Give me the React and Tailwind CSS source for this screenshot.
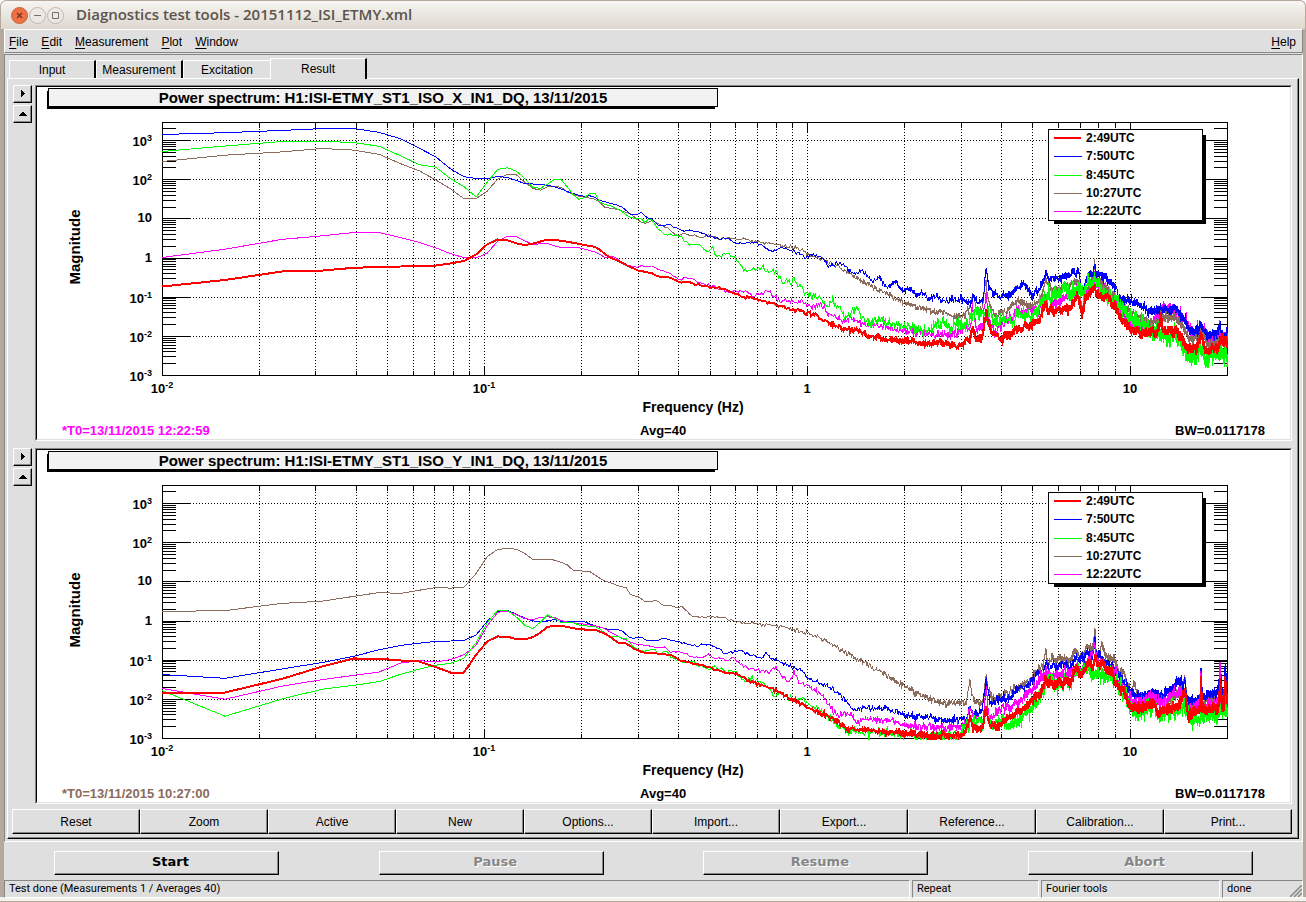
import { useMemo } from 'react'
import clsx from 'clsx'

const MENUS = ['File', 'Edit', 'Measurement', 'Plot', 'Window']
const TABS = ['Input', 'Measurement', 'Excitation', 'Result']
const ACTIONS = [
  'Reset',
  'Zoom',
  'Active',
  'New',
  'Options...',
  'Import...',
  'Export...',
  'Reference...',
  'Calibration...',
  'Print...',
]

const RED = '#ff0000'
const BLUE = '#0000ff'
const GREEN = '#00ff00'
const BROWN = '#8b6b5c'
const MAGENTA = '#ff00ff'

const LEGEND = [
  { label: '2:49UTC', color: RED, wide: true },
  { label: '7:50UTC', color: BLUE },
  { label: '8:45UTC', color: GREEN },
  { label: '10:27UTC', color: BROWN },
  { label: '12:22UTC', color: MAGENTA },
]

// Plot frame inside the canvas
const LEFT = 162.5
const RIGHT = 1227.5
const TOP = 122.5
const BOTTOM = 375.5
const X_DECADE = 322.67
const Y_DECADE = 39.16

// Frequency spacing of the FFT bins
const BIN = 0.0078125

// Each trace is an envelope (x,y pairs) plus the scatter of the single bins
const X_TRACES = [
  {
    color: MAGENTA,
    noise: 2.2,
    points:
      '162,257 200,252 230,248 260,242 280,239 300,238 325,235 350,232 380,232 392,235 417,241 435,247 450,253 463,257 475,258 487,253 497,241 507,236 517,236 523,239 530,244 547,243 560,247 578,247 597,252 605,257 615,256 623,263 632,266 653,266 663,271 670,272 677,278 690,278 710,285 727,290 747,291 753,295 763,293 768,290 775,297 780,300 793,301 803,301 808,307 822,305 828,313 842,320 850,318 863,323 880,325 903,330 930,333 950,335 960,330 970,328 973,308 976,328 983,328 986,293 989,322 993,328 1007,323 1018,310 1033,312 1042,305 1046,295 1050,302 1060,300 1077,290 1082,310 1088,288 1093,282 1095,272 1096,282 1108,292 1120,308 1130,323 1147,327 1157,318 1161,308 1178,312 1187,323 1193,333 1201,327 1208,337 1219,333 1220,320 1221,335 1228,337',
  },
  {
    color: BROWN,
    noise: 1.6,
    points:
      '162,161 200,157 233,154 260,153 300,150 320,148 340,148 357,150 380,154 400,163 417,169 435,179 450,188 463,198 475,199 487,191 497,179 507,174 515,173 523,180 530,187 540,190 547,186 560,186 568,192 580,196 597,199 605,207 618,209 630,213 643,223 652,220 662,225 670,229 677,236 683,233 700,237 707,235 718,238 728,237 757,241 777,244 797,248 813,255 830,262 847,271 863,281 880,290 903,302 927,309 947,314 965,316 970,308 973,292 976,310 982,310 986,278 989,303 995,314 1007,310 1018,300 1033,306 1040,300 1046,278 1051,290 1063,287 1075,280 1079,283 1082,307 1088,287 1093,278 1095,260 1096,280 1108,288 1120,302 1130,312 1143,318 1153,323 1160,318 1161,305 1162,318 1178,318 1190,340 1201,332 1208,343 1228,340',
  },
  {
    color: BLUE,
    noise: 1.7,
    points:
      '162,134 200,133 233,132 260,131 300,129 325,128 357,128 380,132 400,138 420,148 437,157 450,168 463,176 475,178 488,178 497,176 510,177 523,183 543,184 558,187 567,191 583,196 592,195 600,200 615,204 623,207 632,215 642,212 647,217 653,218 657,225 670,224 680,229 700,231 710,235 720,239 728,237 735,242 757,242 767,248 773,250 782,247 792,250 805,257 813,254 822,257 828,265 843,263 852,273 862,270 872,280 880,277 887,287 895,282 903,290 910,287 915,295 923,292 928,298 937,295 943,300 960,299 968,303 972,301 973,292 977,301 983,297 986,267 989,287 993,297 1007,295 1023,284 1033,293 1042,283 1046,272 1050,279 1063,277 1073,271 1078,272 1082,291 1087,278 1093,272 1095,262 1096,272 1107,277 1115,287 1120,297 1130,300 1143,305 1148,312 1157,308 1177,309 1185,320 1190,330 1197,330 1201,323 1207,335 1218,333 1220,325 1223,337 1228,330',
  },
  {
    color: GREEN,
    noise: 3,
    points:
      '162,151 200,147 233,145 275,141 325,141 357,142 380,146 400,155 418,164 435,166 450,178 463,185 475,198 487,182 497,169 507,167 517,171 527,180 532,187 540,188 547,184 554,179 560,178 565,183 572,193 578,199 583,198 590,193 595,193 600,202 615,207 623,212 632,218 642,218 643,221 652,219 657,226 665,234 680,234 688,245 700,243 707,252 713,247 718,257 728,252 745,270 763,267 770,272 773,269 782,280 792,283 793,277 805,292 820,295 827,307 833,300 840,308 845,317 857,308 868,323 877,319 893,323 910,327 927,331 943,321 950,328 960,320 968,323 975,308 984,315 987,311 993,317 1003,323 1023,315 1033,313 1042,303 1047,295 1063,290 1080,290 1082,300 1088,283 1092,284 1095,277 1097,288 1110,295 1120,307 1130,317 1143,322 1150,330 1163,332 1167,337 1178,335 1187,352 1193,358 1201,347 1207,360 1217,353 1228,355',
  },
  {
    color: RED,
    wide: true,
    noise: 1.7,
    points:
      '162,286 200,282 230,279 260,274 280,271 325,270 357,267 400,266 412,265 437,265 450,263 463,261 475,255 487,244 497,239 505,239 523,245 533,243 548,239 560,240 577,243 597,247 608,256 623,263 640,271 650,272 657,276 670,277 680,282 688,281 700,285 727,289 740,296 757,299 773,303 792,309 813,314 830,323 850,330 857,329 868,336 880,338 893,340 927,343 940,342 957,346 970,339 973,325 976,338 982,338 986,311 992,333 1003,337 1023,326 1040,320 1046,302 1048,311 1070,307 1078,295 1082,313 1087,295 1093,290 1095,280 1096,293 1108,297 1120,315 1130,330 1153,333 1158,330 1161,313 1163,330 1178,332 1188,348 1197,348 1201,333 1205,350 1218,347 1220,338 1228,343',
  },
]

const Y_TRACES = [
  {
    color: BROWN,
    noise: 1.7,
    points:
      '162,248 190,248 230,247 260,242 280,240 320,238 353,233 380,229 403,230 433,224 463,225 477,209 488,192 497,186 503,185 515,185 525,190 532,196 553,196 567,201 573,207 590,208 603,217 613,220 620,223 626,224 631,232 638,233 645,238 657,237 662,242 673,242 679,245 682,243 693,253 725,254 738,259 777,262 807,269 820,274 830,280 843,287 860,297 880,308 903,322 927,334 943,340 965,340 967,334 970,316 973,334 980,339 984,334 986,309 989,330 993,336 1010,327 1030,317 1040,304 1043,302 1046,285 1047,300 1060,294 1070,299 1075,285 1080,294 1087,284 1093,287 1095,265 1096,287 1099,289 1102,280 1105,290 1113,297 1123,309 1131,329 1134,317 1137,329 1143,337 1153,332 1160,339 1180,330 1185,314 1187,337 1193,344 1210,337 1228,335',
  },
  {
    color: BLUE,
    noise: 1.9,
    points:
      '162,311 200,314 224,315 260,309 317,300 353,293 380,286 400,282 433,278 465,277 477,271 488,257 497,248 505,246 513,249 523,254 538,259 555,256 560,258 583,258 607,266 620,266 632,275 642,273 647,278 667,275 680,279 697,283 703,280 713,283 727,290 740,287 760,295 765,291 778,297 792,304 805,309 810,316 827,322 843,333 852,345 887,345 907,352 927,354 943,357 967,356 970,344 973,352 982,347 986,319 990,340 1007,335 1017,324 1030,319 1038,309 1043,307 1046,299 1050,304 1060,300 1070,304 1075,294 1080,297 1087,290 1093,290 1095,275 1096,291 1107,300 1117,309 1130,327 1142,334 1153,329 1160,334 1181,317 1183,324 1185,316 1187,336 1193,339 1200,335 1201,305 1202,334 1218,330 1220,302 1222,327 1224,330 1225,302 1227,320 1228,324',
  },
  {
    color: MAGENTA,
    noise: 2.2,
    points:
      '162,325 197,332 224,336 253,329 280,323 323,316 353,312 378,309 402,299 420,297 433,299 448,297 463,292 477,281 488,261 497,249 505,247 513,249 523,255 533,256 538,254 553,253 563,258 587,261 603,264 620,274 633,280 657,284 665,283 670,289 683,289 695,294 703,294 708,290 713,294 727,297 733,295 743,302 755,306 770,308 777,304 782,311 788,319 794,310 800,319 808,322 820,330 827,340 838,352 850,349 857,358 870,355 890,357 907,362 930,364 960,363 967,360 970,344 973,355 983,358 986,325 989,350 993,352 1010,345 1027,332 1038,319 1046,309 1050,313 1060,309 1070,312 1077,300 1081,307 1090,297 1095,280 1097,297 1110,305 1120,320 1131,338 1143,340 1155,333 1160,340 1180,328 1188,347 1200,342 1201,307 1202,343 1219,339 1220,303 1221,339 1228,334',
  },
  {
    color: GREEN,
    noise: 3,
    points:
      '162,327 190,340 224,353 260,342 280,336 320,326 353,322 380,318 400,311 433,302 450,300 463,296 477,278 488,258 497,247 502,246 508,247 517,254 525,262 532,266 540,259 548,251 555,255 560,259 573,259 580,262 597,263 607,272 627,275 633,284 647,289 654,284 658,291 665,287 672,293 680,297 693,300 708,307 712,304 727,307 739,310 745,321 750,316 763,319 770,324 774,334 778,329 790,334 803,337 813,344 818,344 827,354 838,362 847,367 860,369 893,370 927,373 960,373 970,357 975,362 983,362 986,350 993,359 1010,360 1027,350 1038,337 1047,320 1070,319 1077,307 1082,314 1087,304 1093,309 1110,312 1118,320 1127,337 1133,350 1143,347 1153,340 1157,354 1170,347 1185,340 1190,360 1210,350 1228,347',
  },
  {
    color: RED,
    wide: true,
    noise: 1.8,
    points:
      '162,329 228,329 260,321 280,316 317,304 337,300 353,295 378,295 400,297 420,298 437,304 450,309 464,309 477,290 487,278 497,273 507,273 517,276 527,276 537,272 548,263 560,262 580,266 595,266 607,271 618,279 627,280 635,286 647,289 670,291 680,297 700,301 720,308 737,311 750,318 763,322 780,329 792,336 813,346 830,354 847,365 880,368 907,370 933,373 960,371 966,367 970,352 973,365 983,364 986,347 990,360 998,361 1010,354 1027,342 1040,332 1046,315 1048,324 1063,319 1070,320 1076,302 1081,314 1088,300 1093,304 1095,292 1097,305 1102,297 1105,305 1112,309 1115,320 1123,325 1131,344 1143,345 1154,339 1157,349 1177,344 1185,327 1188,354 1198,347 1200,345 1201,314 1202,347 1218,344 1220,317 1222,344 1224,344 1225,314 1227,337 1228,340',
  },
]

function makeRandom(seed) {
  let state = seed
  return () => {
    state = (state * 1664525 + 1013904223) % 4294967296
    return state / 4294967296
  }
}

function buildPath(trace, seed) {
  const random = makeRandom(seed)
  const normal = () => (random() + random() + random() + random() - 2) * 1.73
  const points = trace.points.split(' ').map((pair) => pair.split(',').map(Number))
  const parts = [`M${points[0][0]} ${points[0][1] + 0.5}`]
  let segment = 0
  let drift = 0

  for (let k = 2; k * BIN <= 20; k++) {
    const x = LEFT + X_DECADE * Math.log10((k * BIN) / 0.01)
    while (segment < points.length - 2 && points[segment + 1][0] < x) segment++
    const [x0, y0] = points[segment]
    const [x1, y1] = points[segment + 1]
    const base = y0 + ((x - x0) / (x1 - x0)) * (y1 - y0)
    const ramp = Math.min(1, Math.max(0, (x - 580) / 380))
    drift = drift * 0.88 + normal() * 0.42
    const scatter = normal() * 1.15 + (x > 960 ? drift : 0)
    parts.push(`L${x.toFixed(1)} ${(base + 0.5 + scatter * ramp * trace.noise).toFixed(1)}`)
  }
  return parts.join('')
}

function decadeSteps(from, to) {
  const steps = []
  for (let e = from; e <= to; e++) {
    for (let m = 1; m < 10; m++) steps.push({ major: m === 1, value: e + Math.log10(m) })
  }
  return steps
}

const X_STEPS = decadeSteps(-2, 1)
  .map((s) => ({ ...s, x: Math.floor(LEFT - 0.5 + X_DECADE * (s.value + 2)) + 0.5 }))
  .filter((s) => s.x > LEFT && s.x < RIGHT - 1)

const Y_STEPS = decadeSteps(-3, 3)
  .map((s) => ({ ...s, y: Math.round(BOTTOM - Y_DECADE * (s.value + 3) - 0.5) + 0.5 }))
  .filter((s) => s.y < BOTTOM && s.y > TOP + 1)

const Y_LABELS = [
  { y: 146, exp: '3' },
  { y: 185, exp: '2' },
  { y: 222, text: '10' },
  { y: 262, text: '1' },
  { y: 303, exp: '-1' },
  { y: 342, exp: '-2' },
  { y: 381, exp: '-3' },
]

const X_LABELS = [
  { x: 162, exp: '-2' },
  { x: 484, exp: '-1' },
  { x: 807, text: '1' },
  { x: 1130, text: '10' },
]

function TickLabel({ x, y, exp, text, anchor }) {
  return (
    <text x={x} y={y} textAnchor={anchor} fontSize="13">
      {text || '10'}
      {exp && (
        <tspan dy="-5" fontSize="9">
          {exp}
        </tspan>
      )}
    </text>
  )
}

function SpectrumPlot({ title, traces, stamp, stampColor, seed }) {
  const paths = useMemo(() => traces.map((t, i) => buildPath(t, seed + i * 977)), [traces, seed])
  const clipId = `frame-${seed}`

  return (
    <svg
      viewBox="37 87 1253 352"
      role="img"
      aria-label={title}
      className="block h-auto w-full bg-white font-['Liberation_Sans',Arial,sans-serif] font-bold"
    >
      <clipPath id={clipId}>
        <rect x="162" y="122" width="1066" height="255" />
      </clipPath>

      {/* Title box */}
      <g shapeRendering="crispEdges">
        <rect x="47" y="91" width="668" height="18" fill="#000" />
        <rect x="48.5" y="88.5" width="669" height="18" fill="#f2f2f2" stroke="#000" />
      </g>
      <text x="383" y="103" textAnchor="middle" fontSize="15">
        {title}
      </text>

      {/* Grid, ticks and frame */}
      <g stroke="#000" fill="none" shapeRendering="crispEdges">
        {X_STEPS.map((s) => (
          <g key={s.x}>
            <path d={`M${s.x} ${TOP}V${BOTTOM}`} strokeDasharray="1 2" />
            <path d={`M${s.x} ${TOP}v${s.major ? 9 : 5}M${s.x} ${BOTTOM}v${s.major ? -10 : -5}`} />
          </g>
        ))}
        {Y_STEPS.map((s) => (
          <g key={s.y}>
            {s.major && <path d={`M${LEFT} ${s.y}H${RIGHT}`} strokeDasharray="1 2" />}
            <path d={`M${LEFT} ${s.y}h${s.major ? 27 : 13}M${RIGHT} ${s.y}h${s.major ? -27 : -14}`} />
          </g>
        ))}
        <rect x={LEFT} y={TOP} width={RIGHT - LEFT} height={BOTTOM - TOP} />
      </g>

      {/* Traces */}
      <g fill="none" clipPath={`url(#${clipId})`} shapeRendering="crispEdges">
        {traces.map((t, i) => (
          <path key={t.color} d={paths[i]} stroke={t.color} strokeWidth={t.wide ? 2 : 1} />
        ))}
      </g>

      {Y_LABELS.map((l) => (
        <TickLabel key={l.y} x={152} anchor="end" {...l} />
      ))}
      {X_LABELS.map((l) => (
        <TickLabel key={l.x} y={393} anchor="middle" {...l} />
      ))}
      <text transform="translate(80 247) rotate(-90)" textAnchor="middle" fontSize="15">
        Magnitude
      </text>
      <text x="693" y="412" textAnchor="middle" fontSize="14">
        Frequency (Hz)
      </text>
      <g fontSize="13">
        <text x="62" y="435" fill={stampColor}>
          {stamp}
        </text>
        <text x="640" y="435">
          Avg=40
        </text>
        <text x="1265" y="435" textAnchor="end">
          BW=0.0117178
        </text>
      </g>

      {/* Legend */}
      <g shapeRendering="crispEdges">
        <rect x="1054" y="135" width="152" height="89" fill="#000" />
        <rect x="1048.5" y="129.5" width="154" height="91" fill="#fff" stroke="#000" />
      </g>
      {LEGEND.map((item, i) => {
        const y = Math.round(138 + i * 18.3)
        return (
          <g key={item.label}>
            <path
              d={item.wide ? `M1054 ${y}h27` : `M1054 ${y + 0.5}h28`}
              stroke={item.color}
              strokeWidth={item.wide ? 2 : 1}
              shapeRendering="crispEdges"
            />
            <text x="1086" y={y + 4} fontSize="12">
              {item.label}
            </text>
          </g>
        )
      })}
    </svg>
  )
}

function ArrowButton({ label, path }) {
  return (
    <button
      aria-label={label}
      className="flex h-[18px] w-[19px] items-center justify-center border border-t-white border-l-white border-r-black border-b-black shadow-[inset_-1px_-1px_0_#868686]"
    >
      <svg viewBox="0 0 8 8" className="h-2 w-2" shapeRendering="crispEdges">
        <path d={path} />
      </svg>
    </button>
  )
}

function PlotPanel(props) {
  return (
    <div className="flex items-start gap-[3px]">
      <div className="flex shrink-0 flex-col gap-0.5">
        <ArrowButton label="Expand options" path="M2 0h1v1h1v1h1v1h1v1h-1v1h-1v1h-1v1h-1z" />
        <ArrowButton label="Collapse plot" path="M3 2h2v1h1v1h1v1h1v1H0v-1h1v-1h1v-1h1z" />
      </div>
      <div className="min-w-0 flex-1 border border-t-[#868686] border-l-[#868686] border-r-white border-b-white">
        <div className="border border-t-black border-l-black border-r-[#dfdfdf] border-b-[#dfdfdf]">
          <SpectrumPlot {...props} />
        </div>
      </div>
    </div>
  )
}

function TitleBar() {
  const dot = 'flex h-[17px] w-[17px] items-center justify-center rounded-full border'
  return (
    <header className="flex h-[29px] items-center rounded-t-md border border-b-0 border-[#b5a89c] bg-linear-to-b from-[#f7f5f2] to-[#ddd7cf] pl-[10px]">
      <div className="flex gap-px">
        <button aria-label="Close" className={clsx(dot, 'border-[#c4663f] bg-[#ef7046]')}>
          <svg viewBox="0 0 7 7" className="h-[7px] w-[7px]" stroke="#6b3420" strokeWidth="1.2">
            <path d="M1 1l5 5M6 1l-5 5" />
          </svg>
        </button>
        <button aria-label="Minimize" className={clsx(dot, 'border-[#bfb8af] bg-[#ece8e3]')}>
          <svg viewBox="0 0 7 7" className="h-[7px] w-[7px]" stroke="#75706a">
            <path d="M0 3.5h7" />
          </svg>
        </button>
        <button aria-label="Maximize" className={clsx(dot, 'border-[#bfb8af] bg-[#ece8e3]')}>
          <svg viewBox="0 0 7 7" className="h-[7px] w-[7px]" fill="none" stroke="#75706a">
            <path d="M.5 .5h6v6h-6z" />
          </svg>
        </button>
      </div>
      <h1 className="ml-3 pb-0.5 font-['Open_Sans','Noto_Sans',sans-serif] text-[15px] font-semibold text-[#5b544c]">
        Diagnostics test tools - 20151112_ISI_ETMY.xml
      </h1>
    </header>
  )
}

function MenuItem({ label }) {
  return (
    <button>
      <span className="underline underline-offset-2">{label[0]}</span>
      {label.slice(1)}
    </button>
  )
}

function RunButton({ label, disabled }) {
  return (
    <div className="flex justify-center">
      <button
        disabled={disabled}
        className={clsx(
          "h-6 w-[225px] border border-t-white border-l-white border-r-black border-b-black pb-0.5 pl-2 font-['DejaVu_Sans',sans-serif] text-[13px] leading-5 font-bold shadow-[inset_-1px_-1px_0_#868686]",
          disabled && 'text-[#868686] [text-shadow:1px_1px_0_#fff]',
        )}
      >
        {label}
      </button>
    </div>
  )
}

export default function App() {
  return (
    <div className="flex min-h-screen flex-col bg-white font-['Liberation_Sans',Arial,sans-serif] text-xs text-black">
      <TitleBar />
      <div className="flex flex-1 flex-col border-r-[3px] border-l-4 border-[#b5a99d] bg-[#dfdfdf]">
        <nav className="mb-px flex h-6 items-center gap-[13px] border border-t-white border-l-white border-r-[#868686] border-b-[#868686] pt-0.5 pr-[6px] pl-1">
          {MENUS.map((m) => (
            <MenuItem key={m} label={m} />
          ))}
          <div className="ml-auto">
            <MenuItem label="Help" />
          </div>
        </nav>

        <main className="border border-t-[#868686] border-l-[#868686] border-r-white border-b-white pt-[3px] pr-[3px] pb-0.5 pl-0.5">
          {/* Tabs */}
          <div role="tablist" className="flex items-end pl-0.5">
            {TABS.map((tab) => {
              const active = tab === 'Result'
              return (
                <button
                  key={tab}
                  role="tab"
                  aria-selected={active}
                  className={clsx(
                    'border-t border-l border-white',
                    active
                      ? 'relative z-10 -mb-px h-[21px] w-[97px] border-r-2 border-r-black bg-[#dfdfdf]'
                      : 'h-[18px] w-[87px]',
                    !active && tab !== 'Excitation' && 'border-r-2 border-r-black',
                  )}
                >
                  {tab}
                </button>
              )
            })}
          </div>

          <section className="border border-t-white border-l-white border-r-black border-b-black pt-[6px] pb-1 shadow-[inset_-1px_-1px_0_#868686]">
            <div className="flex flex-col gap-[7px] pr-[6px] pl-[5px]">
              <PlotPanel
                title="Power spectrum: H1:ISI-ETMY_ST1_ISO_X_IN1_DQ, 13/11/2015"
                traces={X_TRACES}
                stamp="*T0=13/11/2015 12:22:59"
                stampColor={MAGENTA}
                seed={11}
              />
              <PlotPanel
                title="Power spectrum: H1:ISI-ETMY_ST1_ISO_Y_IN1_DQ, 13/11/2015"
                traces={Y_TRACES}
                stamp="*T0=13/11/2015 10:27:00"
                stampColor={BROWN}
                seed={42}
              />
            </div>
            <div className="mt-[5px] grid grid-cols-10 pr-[6px] pl-1">
              {ACTIONS.map((a) => (
                <button
                  key={a}
                  className="h-[25px] border border-t-white border-l-white border-r-black border-b-black shadow-[inset_-1px_-1px_0_#868686]"
                >
                  {a}
                </button>
              ))}
            </div>
          </section>
        </main>

        <div className="grid grid-cols-4 pt-[9px] pb-[5px]">
          <RunButton label="Start" />
          <RunButton label="Pause" disabled />
          <RunButton label="Resume" disabled />
          <RunButton label="Abort" disabled />
        </div>

        {/* Status bar */}
        <footer className="grid h-[17px] grid-cols-[906fr_127fr_179fr_81fr] gap-0.5 font-[Roboto,sans-serif] text-[11px] leading-4">
          {['Test done (Measurements 1 / Averages 40)', 'Repeat', 'Fourier tools', 'done'].map((s) => (
            <div
              key={s}
              className="relative border border-t-[#868686] border-l-[#868686] border-r-white border-b-white pl-1 whitespace-nowrap"
            >
              {s}
              {s === 'done' && (
                <svg
                  viewBox="0 0 12 12"
                  className="absolute right-0 bottom-0 h-3 w-3"
                  stroke="#868686"
                  strokeWidth="1.5"
                >
                  <path d="M0 12L12 0M4 12L12 4M8 12L12 8" />
                </svg>
              )}
            </div>
          ))}
        </footer>
      </div>
      <div className="h-[5px] border-b border-[#b5a99d] bg-[#f4f2ef]" />
    </div>
  )
}
